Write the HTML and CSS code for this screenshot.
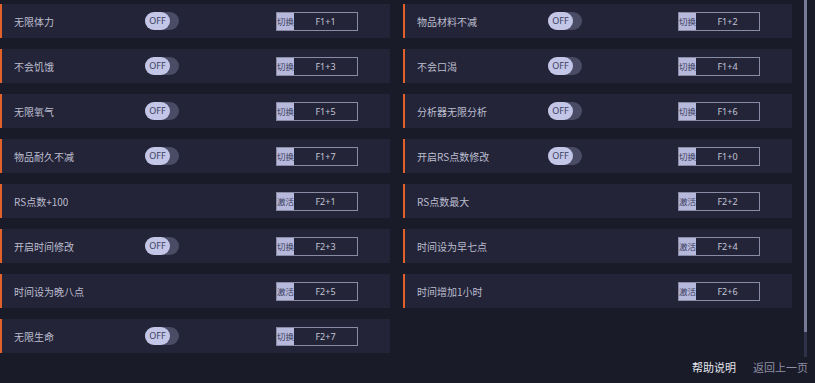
FILE: index.html
```html
<!DOCTYPE html>
<html lang="zh">
<head>
<meta charset="utf-8">
<link rel="stylesheet" href="styles.css">
</head>
<body>
<div class="page">
  <div class="main">
    <div class="grid">
      <div class="cell"><span class="name">无限体力</span><span class="toggle"><span class="knob">OFF</span></span><span class="key"><span class="lbl">切换</span><span class="hk">F1+1</span></span></div>
      <div class="cell"><span class="name">物品材料不减</span><span class="toggle"><span class="knob">OFF</span></span><span class="key"><span class="lbl">切换</span><span class="hk">F1+2</span></span></div>
      <div class="cell"><span class="name">不会饥饿</span><span class="toggle"><span class="knob">OFF</span></span><span class="key"><span class="lbl">切换</span><span class="hk">F1+3</span></span></div>
      <div class="cell"><span class="name">不会口渴</span><span class="toggle"><span class="knob">OFF</span></span><span class="key"><span class="lbl">切换</span><span class="hk">F1+4</span></span></div>
      <div class="cell"><span class="name">无限氧气</span><span class="toggle"><span class="knob">OFF</span></span><span class="key"><span class="lbl">切换</span><span class="hk">F1+5</span></span></div>
      <div class="cell"><span class="name">分析器无限分析</span><span class="toggle"><span class="knob">OFF</span></span><span class="key"><span class="lbl">切换</span><span class="hk">F1+6</span></span></div>
      <div class="cell"><span class="name">物品耐久不减</span><span class="toggle"><span class="knob">OFF</span></span><span class="key"><span class="lbl">切换</span><span class="hk">F1+7</span></span></div>
      <div class="cell"><span class="name">开启RS点数修改</span><span class="toggle"><span class="knob">OFF</span></span><span class="key"><span class="lbl">切换</span><span class="hk">F1+0</span></span></div>
      <div class="cell"><span class="name">RS点数+100</span><span class="key"><span class="lbl">激活</span><span class="hk">F2+1</span></span></div>
      <div class="cell"><span class="name">RS点数最大</span><span class="key"><span class="lbl">激活</span><span class="hk">F2+2</span></span></div>
      <div class="cell"><span class="name">开启时间修改</span><span class="toggle"><span class="knob">OFF</span></span><span class="key"><span class="lbl">切换</span><span class="hk">F2+3</span></span></div>
      <div class="cell"><span class="name">时间设为早七点</span><span class="key"><span class="lbl">激活</span><span class="hk">F2+4</span></span></div>
      <div class="cell"><span class="name">时间设为晚八点</span><span class="key"><span class="lbl">激活</span><span class="hk">F2+5</span></span></div>
      <div class="cell"><span class="name">时间增加1小时</span><span class="key"><span class="lbl">激活</span><span class="hk">F2+6</span></span></div>
      <div class="cell"><span class="name">无限生命</span><span class="toggle"><span class="knob">OFF</span></span><span class="key"><span class="lbl">切换</span><span class="hk">F2+7</span></span></div>
    </div>
    <div class="scroll"><div class="thumb"></div></div>
  </div>
  <div class="footer">
    <span class="help">帮助说明</span>
    <span class="back">返回上一页</span>
  </div>
</div>
</body>
</html>
```
FILE: styles.css
```css
html, body {
  margin: 0;
  padding: 0;
  background: #1a1b29;
  font-family: "Noto Sans CJK SC", "Noto Sans", sans-serif;
}
.page {
  width: 815px;
  height: 383px;
  overflow: hidden;
  display: flex;
  flex-direction: column;
}
.main {
  display: flex;
  align-items: flex-start;
  height: 357px;
}
.grid {
  display: grid;
  grid-template-columns: 390px 389px;
  grid-auto-rows: 34px;
  column-gap: 13px;
  row-gap: 11px;
  padding-top: 4px;
}
.cell {
  display: flex;
  align-items: center;
  background: #232437;
  border-left: 2px solid #e2612b;
  padding-left: 12px;
  padding-right: 32px;
}
.name {
  width: 131px;
  flex-shrink: 0;
  font-size: 10px;
  color: #bcbdcf;
  white-space: nowrap;
}
.toggle {
  width: 34px;
  height: 18px;
  border-radius: 9px;
  background: #4a4c66;
  display: flex;
  align-items: center;
}
.knob {
  width: 25px;
  height: 18px;
  border-radius: 9px;
  background: #c3c6e6;
  color: #3b3e5c;
  font-size: 9px;
  line-height: 18px;
  text-align: center;
  font-family: "Noto Sans", sans-serif;
}
.key {
  margin-left: auto;
  width: 80px;
  height: 17px;
  border: 1px solid #8a8ca6;
  display: flex;
  align-items: stretch;
}
.lbl {
  width: 17px;
  background: #b6b9dc;
  color: #3d4060;
  font-size: 8.5px;
  line-height: 17px;
  text-align: center;
  white-space: nowrap;
  overflow: hidden;
}
.hk {
  flex: 1;
  color: #c4c5d6;
  font-size: 9px;
  line-height: 17px;
  text-align: center;
  font-family: "Noto Sans", sans-serif;
}
.scroll {
  margin-left: 12px;
  width: 3px;
  height: 357px;
  background: #2e3147;
}
.thumb {
  height: 332px;
  background: #777b98;
}
.footer {
  display: flex;
  justify-content: flex-end;
  gap: 17px;
  padding-right: 7px;
  font-size: 11px;
  line-height: 20px;
}
.help {
  color: #e6e7ef;
}
.back {
  color: #8d8fa4;
}
```
